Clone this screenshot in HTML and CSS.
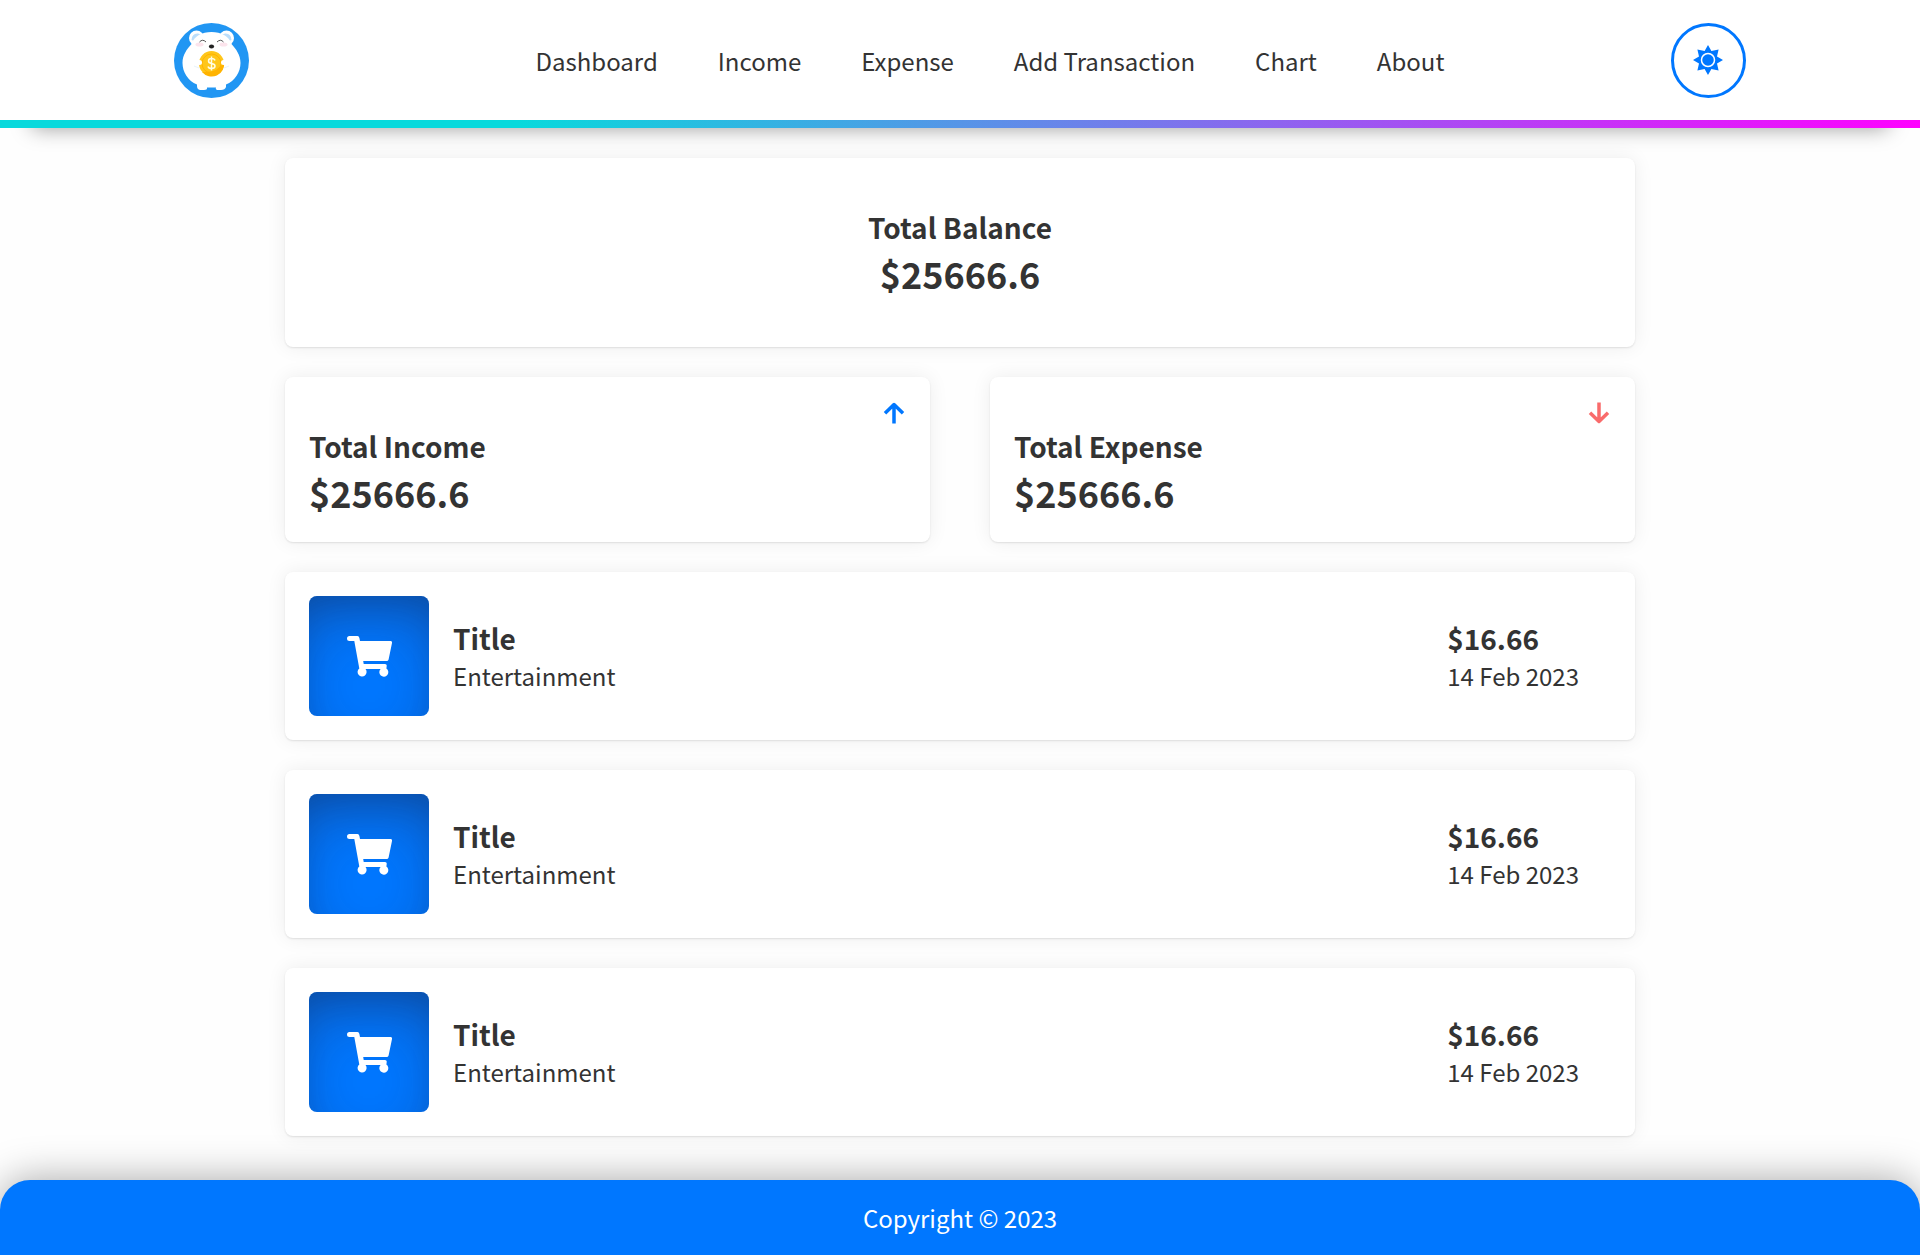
FILE: index.html
```html
<!DOCTYPE html>
<html lang="en">
<head>
<meta charset="utf-8">
<meta name="viewport" content="width=device-width, initial-scale=1">
<title>Dashboard</title>
<link rel="stylesheet" href="styles.css">
</head>
<body>
<svg class="sprite" aria-hidden="true">
  <symbol id="cart" viewBox="0 0 45 41">
    <path d="M2.500 0H10.500Q12 0 12.400 2L13 5H43.500Q45.300 5.200 45 7L41.600 23.500Q41.300 25 39.500 25H16.200L16.700 28H38Q40 28.200 39.700 30L39.400 32.500A4.500 4.500 0 1 1 33.600 33H18.500A4.500 4.500 0 1 1 12.300 32.400L7.300 5H2.500A2.500 2.500 0 0 1 2.500 0Z"/>
  </symbol>
</svg>
<header class="header">
  <div class="header-inner">
    <a class="logo" href="#" aria-label="Home">
      <svg viewBox="0 0 75 75">
        <circle cx="37.500" cy="37.500" r="37.500" fill="#2196f3"/>
        <circle cx="22.500" cy="15" r="7.500" fill="#fff"/>
        <circle cx="52.500" cy="15" r="7.500" fill="#fff"/>
        <path d="M17.500 17Q18 10 24 10.500L28 12L20 18Z" fill="#bbdefb"/>
        <path d="M57.500 17Q57 10 51 10.500L47 12L55 18Z" fill="#bbdefb"/>
        <path d="M37.500 9C47 9 55 13 57.500 21C62 26 66.500 32 66.500 40C66.500 49 61 58 52 61.500V64Q51 67 47 67H43Q41 66 42 64.500H33Q33.500 67 30 67H26Q23 66.500 23 63V61.500C14 58 8.500 49 8.500 40C8.500 32 13 26 17.500 21C20 13 28 9 37.500 9Z" fill="#fff"/>
        <ellipse cx="25.500" cy="21.500" rx="4" ry="2" fill="#fce4ec"/>
        <ellipse cx="49.500" cy="21.500" rx="4" ry="2" fill="#fce4ec"/>
        <path d="M25.500 19Q28.500 15.500 32 19M43 19Q46.500 15.500 49.500 19" fill="none" stroke="#555" stroke-width="1"/>
        <ellipse cx="37.500" cy="23.500" rx="2.600" ry="2" fill="#222"/>
        <circle cx="37.500" cy="40.500" r="12.500" fill="#ffc61a"/>
        <path d="M28 49A12.500 12.500 0 0 0 50 39Q44 50 28 49Z" fill="#ffb300"/>
        <circle cx="37.500" cy="40.500" r="9.500" fill="none" stroke="#ffb300"/>
        <path d="M41 37.500Q40.500 35.500 37.500 35.500Q34.500 35.500 34.500 38Q34.500 40 37.500 40.500Q41 41 41 43Q41 45.500 37.500 45.500Q34.500 45.500 34 43.500M37.500 33.500V47.500" fill="none" stroke="#fffde7" stroke-width="1.500"/>
        <circle cx="25.500" cy="39.500" r="2.500" fill="#fff"/>
        <circle cx="49.500" cy="39.500" r="2.500" fill="#fff"/>
        <path d="M20 43L25 45M55 43L50 45" stroke="#e8f3fb" stroke-width="1"/>
      </svg>
    </a>
    <nav aria-label="Main">
      <ul class="menu">
        <li><a href="#">Dashboard</a></li>
        <li><a href="#">Income</a></li>
        <li><a href="#">Expense</a></li>
        <li><a href="#">Add Transaction</a></li>
        <li><a href="#">Chart</a></li>
        <li><a href="#">About</a></li>
      </ul>
    </nav>
    <button class="theme" type="button" aria-label="Toggle theme">
      <svg viewBox="0 0 30 30">
        <path d="M15 0L18.400 6L25.600 4.400L24 11.600L30 15L24 18.400L25.600 25.600L18.400 24L15 30L11.600 24L4.400 25.600L6 18.400L0 15L6 11.600L4.400 4.400L11.600 6Z" fill="#07f"/>
        <circle cx="15" cy="15" r="6.500" fill="#07f" stroke="#fff" stroke-width="1.500"/>
      </svg>
    </button>
  </div>
</header>
<main class="main">
  <section class="card balance">
    <h2 class="label">Total Balance</h2>
    <p class="total">$25666.6</p>
  </section>
  <div class="summary">
    <section class="card stat">
      <svg class="arrow up" viewBox="0 0 24 24"><path d="M12 22.500V4M3 12.200L12 3.500L21 12.200"/></svg>
      <h2 class="label">Total Income</h2>
      <p class="total">$25666.6</p>
    </section>
    <section class="card stat">
      <svg class="arrow down" viewBox="0 0 24 24"><path d="M12 1.500V20M3 11.800L12 20.500L21 11.800"/></svg>
      <h2 class="label">Total Expense</h2>
      <p class="total">$25666.6</p>
    </section>
  </div>
  <article class="card entry">
    <div class="tile"><svg class="cart"><use href="#cart"/></svg></div>
    <div class="info"><h3 class="title">Title</h3><p class="detail">Entertainment</p></div>
    <div class="amount"><p class="title">$16.66</p><p class="detail">14 Feb 2023</p></div>
  </article>
  <article class="card entry">
    <div class="tile"><svg class="cart"><use href="#cart"/></svg></div>
    <div class="info"><h3 class="title">Title</h3><p class="detail">Entertainment</p></div>
    <div class="amount"><p class="title">$16.66</p><p class="detail">14 Feb 2023</p></div>
  </article>
  <article class="card entry">
    <div class="tile"><svg class="cart"><use href="#cart"/></svg></div>
    <div class="info"><h3 class="title">Title</h3><p class="detail">Entertainment</p></div>
    <div class="amount"><p class="title">$16.66</p><p class="detail">14 Feb 2023</p></div>
  </article>
</main>
<footer class="footer">Copyright © 2023</footer>
</body>
</html>
```
FILE: styles.css
```css
* {
  box-sizing: border-box;
  margin: 0;
  padding: 0;
}

body {
  min-height: 100vh;
  display: flex;
  flex-direction: column;
  background: #fefefe;
  color: #333;
  font-family: "Noto Sans CJK JP", "Noto Sans", sans-serif;
  font-size: 24px;
  font-weight: 400;
  line-height: 36px;
}

.sprite {
  display: block;
  width: 0;
  height: 0;
}

.header {
  background: #fff;
  box-shadow: 0 32px 20px -32px rgba(0, 0, 0, 0.4);
}

.header::after {
  content: "";
  display: block;
  height: 8px;
  background: linear-gradient(to right, #08d9dc 27%, #f0f);
}

.header-inner {
  display: flex;
  align-items: center;
  justify-content: space-between;
  max-width: 1572px;
  min-height: 120px;
  margin: 0 auto;
}

.logo,
.theme {
  width: 75px;
  height: 75px;
  border-radius: 50%;
}

.logo svg {
  display: block;
}

.menu {
  display: flex;
  padding-top: 2px;
  list-style: none;
}

.menu li {
  margin-left: 60px;
}

.menu a {
  color: inherit;
  text-decoration: none;
}

.theme {
  display: flex;
  align-items: center;
  justify-content: center;
  border: 3px solid #07f;
  background: #fff;
  cursor: pointer;
}

.theme svg {
  width: 30px;
  height: 30px;
}

.main {
  display: flex;
  flex-direction: column;
  gap: 30px;
  width: 100%;
  max-width: 1350px;
  margin: 30px auto 44px;
}

.card {
  padding: 24px;
  border-radius: 8px;
  background: #fff;
  box-shadow: 0 0 20px rgba(0, 0, 0, 0.07), 0 1px 2px rgba(0, 0, 0, 0.1);
}

.balance {
  padding: 48px 24px;
  text-align: center;
}

.summary {
  display: grid;
  grid-template-columns: 1fr 1fr;
  gap: 60px;
}

.stat {
  display: flex;
  flex-direction: column;
}

.arrow {
  align-self: flex-end;
  width: 24px;
  height: 24px;
  fill: none;
  stroke-width: 3.5;
  stroke-linejoin: round;
}

.up {
  stroke: #07f;
}

.down {
  stroke: #f96b6b;
}

.label {
  font-size: 28px;
  font-weight: 700;
  line-height: 43px;
}

.total {
  margin-bottom: 2px;
  font-size: 36px;
  font-weight: 700;
  line-height: 48px;
}

.entry {
  display: flex;
  align-items: center;
  gap: 24px;
}

.tile {
  display: flex;
  align-items: center;
  justify-content: center;
  width: 120px;
  height: 120px;
  border-radius: 8px;
  background: #07f;
  box-shadow: inset 0 30px 60px -12px rgba(30, 30, 60, 0.4), inset 0 18px 36px -18px rgba(0, 0, 0, 0.15);
}

.cart {
  width: 45px;
  height: 41px;
  fill: #fff;
}

.title {
  font-size: 28px;
  font-weight: 700;
  line-height: 40px;
}

.amount {
  margin-left: auto;
  padding-right: 32px;
}

.footer {
  margin-top: auto;
  padding: 20px;
  border-radius: 30px 30px 0 0;
  background: #07f;
  box-shadow: 0 0 40px rgba(0, 0, 0, 0.35);
  color: #fff;
  line-height: 35px;
  text-align: center;
}
```
